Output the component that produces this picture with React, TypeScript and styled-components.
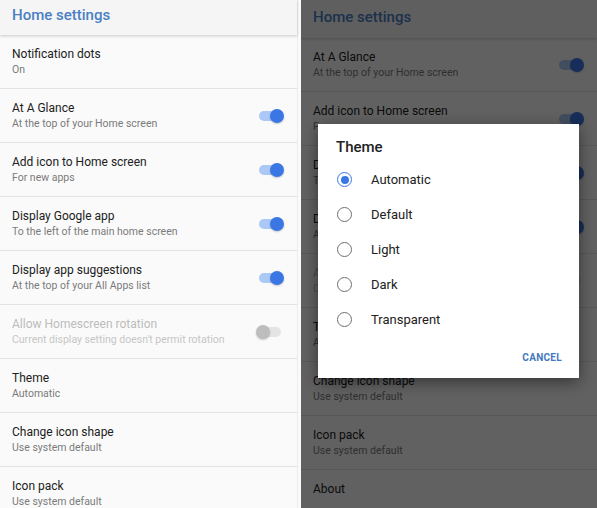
import { createGlobalStyle, styled } from "styled-components";

type Setting = {
  title: string;
  summary?: string;
  toggle?: "on" | "disabled";
};

const settings: Setting[] = [
  { title: "Notification dots", summary: "On" },
  { title: "At A Glance", summary: "At the top of your Home screen", toggle: "on" },
  { title: "Add icon to Home screen", summary: "For new apps", toggle: "on" },
  { title: "Display Google app", summary: "To the left of the main home screen", toggle: "on" },
  { title: "Display app suggestions", summary: "At the top of your All Apps list", toggle: "on" },
  {
    title: "Allow Homescreen rotation",
    summary: "Current display setting doesn't permit rotation",
    toggle: "disabled",
  },
  { title: "Theme", summary: "Automatic" },
  { title: "Change icon shape", summary: "Use system default" },
  { title: "Icon pack", summary: "Use system default" },
  { title: "About" },
];

const themes = ["Automatic", "Default", "Light", "Dark", "Transparent"];

const SettingsList = ({ rows, headerHeight }: { rows: Setting[]; headerHeight: number }) => (
  <>
    <St.Header $height={headerHeight}>Home settings</St.Header>
    <St.List>
      {rows.map((row) => {
        const disabled = row.toggle === "disabled";
        return (
          <St.Row key={row.title}>
            <St.RowText>
              <St.Title $disabled={disabled}>{row.title}</St.Title>
              {row.summary && <St.Summary $disabled={disabled}>{row.summary}</St.Summary>}
            </St.RowText>
            {row.toggle && (
              <St.Switch>
                <St.Track $on={!disabled} />
                <St.Thumb $on={!disabled} />
              </St.Switch>
            )}
          </St.Row>
        );
      })}
    </St.List>
  </>
);

const ThemeDialog = () => (
  <St.Dialog>
    <St.DialogTitle>Theme</St.DialogTitle>
    {themes.map((name, i) => (
      <St.Option key={name}>
        <St.Radio $checked={i === 0} />
        <St.OptionLabel>{name}</St.OptionLabel>
      </St.Option>
    ))}
    <St.DialogFooter>
      <St.TextButton>CANCEL</St.TextButton>
    </St.DialogFooter>
  </St.Dialog>
);

const App = () => {
  return (
    <>
      <GlobalStyle />
      <St.Page>
        <St.Screen $width={301}>
          <St.Frame>
            <SettingsList rows={settings.slice(0, 9)} headerHeight={35} />
          </St.Frame>
        </St.Screen>
        <St.Screen $width={296}>
          <SettingsList rows={settings.slice(1)} headerHeight={38} />
          <St.Scrim />
          <ThemeDialog />
        </St.Screen>
      </St.Page>
    </>
  );
};

export default App;

const GlobalStyle = createGlobalStyle`
  body {
    margin: 0;
    background: #fafafa;
    font-family: Roboto, "Liberation Sans", sans-serif;
  }
`;

const St = {
  Page: styled.div`
    display: flex;
    width: 597px;
    height: 508px;
    overflow: hidden;
  `,
  Screen: styled.div<{ $width: number }>`
    position: relative;
    display: flex;
    flex-direction: column;
    width: ${(p) => p.$width}px;
    flex-shrink: 0;
    overflow: hidden;
    background: #fafafa;
  `,
  Frame: styled.div`
    display: flex;
    flex-direction: column;
    margin-right: 3px;
    border-right: 1px solid #ececec;
    min-height: 100%;
  `,
  Header: styled.div<{ $height: number }>`
    display: flex;
    align-items: center;
    flex-shrink: 0;
    height: ${(p) => p.$height}px;
    padding: 0 12px 5px;
    box-sizing: border-box;
    background: #f5f5f5;
    box-shadow: 0 1px 3px rgba(0, 0, 0, 0.2);
    color: #4a7fc4;
    font-size: 15px;
    font-weight: 500;
    position: relative;
    z-index: 1;
  `,
  List: styled.div`
    display: flex;
    flex-direction: column;
  `,
  Row: styled.div`
    display: flex;
    align-items: center;
    flex-shrink: 0;
    height: 54px;
    padding: 0 12px;
    box-sizing: border-box;
    border-bottom: 1px solid #e3e3e3;
  `,
  RowText: styled.div`
    flex: 1;
    display: flex;
    flex-direction: column;
    min-height: 30px;
  `,
  Title: styled.div<{ $disabled: boolean }>`
    font-size: 12px;
    line-height: 15px;
    color: ${(p) => (p.$disabled ? "#bcbcbc" : "#212121")};
  `,
  Summary: styled.div<{ $disabled: boolean }>`
    font-size: 10.5px;
    line-height: 15px;
    color: ${(p) => (p.$disabled ? "#c6c6c6" : "#7a7a7a")};
  `,
  Switch: styled.div`
    position: relative;
    width: 28px;
    height: 14px;
    margin-right: 1px;
  `,
  Track: styled.div<{ $on: boolean }>`
    position: absolute;
    left: 3px;
    right: 3px;
    top: 2px;
    height: 10px;
    border-radius: 5px;
    background: ${(p) => (p.$on ? "#abc8f6" : "#e4e4e4")};
  `,
  Thumb: styled.div<{ $on: boolean }>`
    position: absolute;
    top: 0;
    left: ${(p) => (p.$on ? "14px" : "0")};
    width: 14px;
    height: 14px;
    border-radius: 50%;
    background: ${(p) => (p.$on ? "#3a77e4" : "#bdbdbd")};
    box-shadow: 0 1px 2px rgba(0, 0, 0, 0.2);
  `,
  Scrim: styled.div`
    position: absolute;
    inset: 0;
    background: rgba(0, 0, 0, 0.61);
    z-index: 2;
  `,
  Dialog: styled.div`
    position: absolute;
    left: 17px;
    top: 124px;
    width: 261px;
    height: 254px;
    box-sizing: border-box;
    padding-top: 14px;
    display: flex;
    flex-direction: column;
    background: #ffffff;
    box-shadow: 0 4px 14px rgba(0, 0, 0, 0.45);
    z-index: 3;
  `,
  DialogTitle: styled.div`
    padding: 0 18px;
    margin-bottom: 6px;
    font-size: 15px;
    line-height: 18px;
    font-weight: 500;
    color: #212121;
  `,
  Option: styled.div`
    display: flex;
    align-items: center;
    gap: 19px;
    height: 35px;
    padding-left: 19px;
  `,
  Radio: styled.div<{ $checked: boolean }>`
    position: relative;
    width: 15px;
    height: 15px;
    box-sizing: border-box;
    border-radius: 50%;
    border: 1.5px solid ${(p) => (p.$checked ? "#3a77e4" : "#6f6f6f")};

    &::after {
      content: "";
      display: ${(p) => (p.$checked ? "block" : "none")};
      position: absolute;
      inset: 2.5px;
      border-radius: 50%;
      background: #3a77e4;
    }
  `,
  OptionLabel: styled.span`
    font-size: 13px;
    color: #212121;
  `,
  DialogFooter: styled.div`
    display: flex;
    justify-content: flex-end;
    padding: 4px 8px 4px;
  `,
  TextButton: styled.button`
    height: 32px;
    padding: 0 9px;
    border: none;
    background: none;
    font-family: inherit;
    font-size: 10px;
    font-weight: 700;
    letter-spacing: 0.3px;
    color: #4579bd;
  `,
};
